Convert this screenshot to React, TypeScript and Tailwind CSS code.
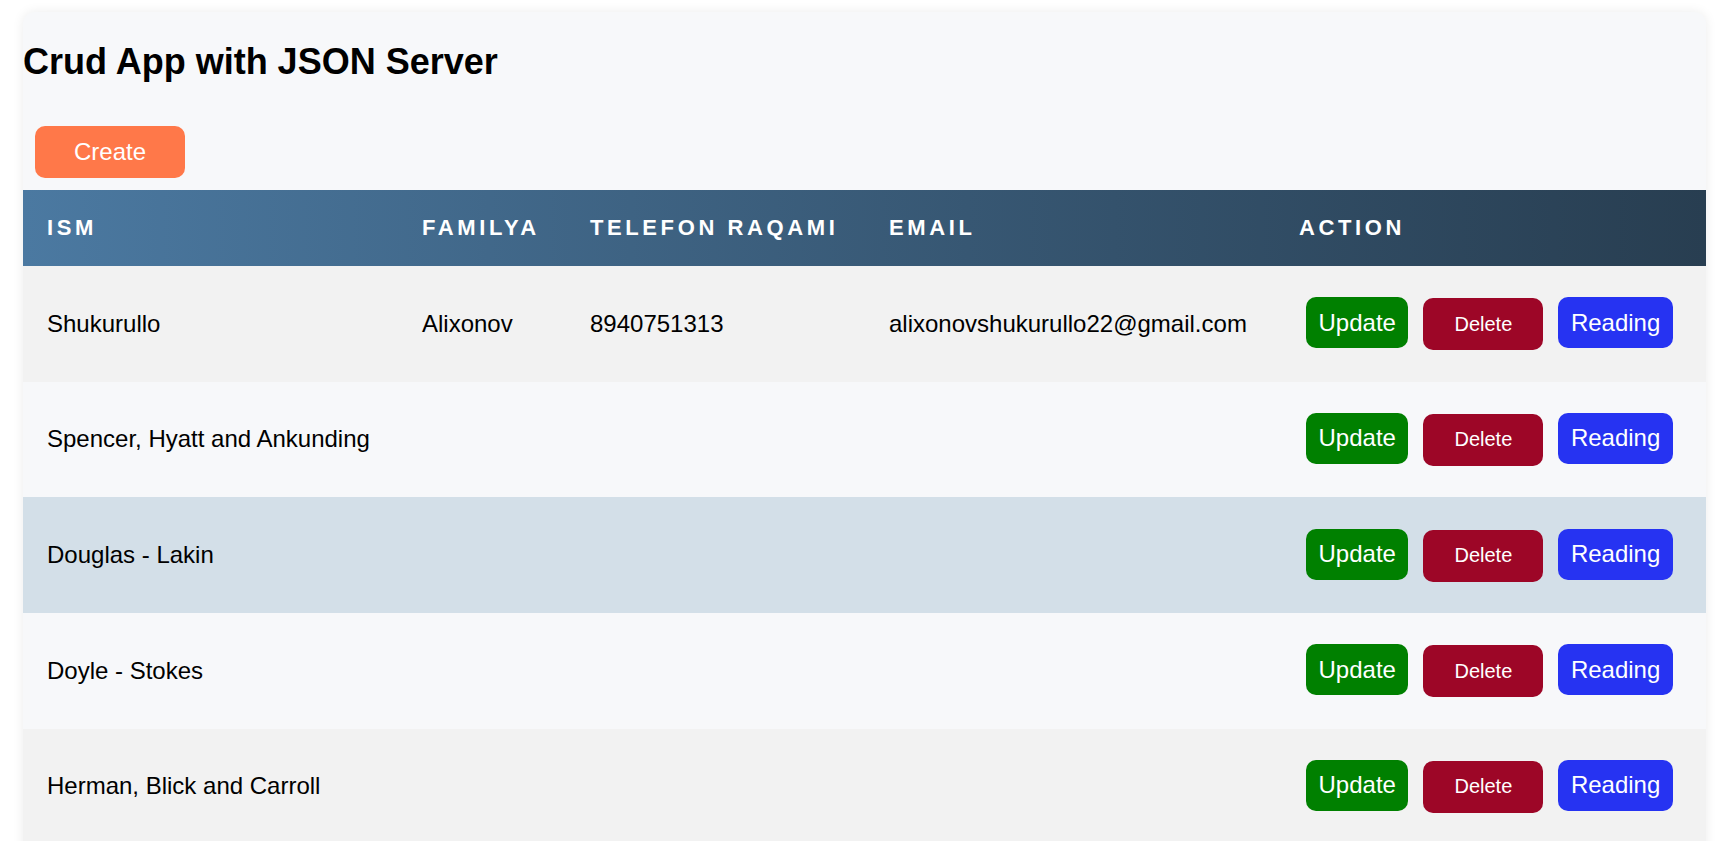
import React from "react";

type Row = { name: string; family: string; phone: string; email: string; bg: string };

const rows: Row[] = [
  { name: "Shukurullo", family: "Alixonov", phone: "8940751313", email: "alixonovshukurullo22@gmail.com", bg: "bg-[#f2f2f2]" },
  { name: "Spencer, Hyatt and Ankunding", family: "", phone: "", email: "", bg: "bg-[#f7f8fa]" },
  { name: "Douglas - Lakin", family: "", phone: "", email: "", bg: "bg-[#d3dfe8]" },
  { name: "Doyle - Stokes", family: "", phone: "", email: "", bg: "bg-[#f7f8fa]" },
  { name: "Herman, Blick and Carroll", family: "", phone: "", email: "", bg: "bg-[#f2f2f2]" },
];

const cols = "grid grid-cols-[375px_168px_299px_410px_1fr]";

export default function App() {
  return (
    <div className="min-h-screen bg-white font-['Liberation_Sans',Arial,sans-serif] text-black overflow-hidden h-[841px]">
      <div className="ml-[23px] mt-[12px] w-[1683px] rounded-xl bg-[#f7f8fa] shadow-[0_0_12px_rgba(0,0,0,0.08)] pb-[20px]">
        <h1 className="pt-[29px] text-[36px] leading-[41px] font-bold">Crud App with JSON Server</h1>
        <div className="mt-[44px] ml-[12px]">
          <button className="w-[150px] h-[52px] rounded-[10px] bg-[#ff7849] text-white text-[24px] leading-[28px]">
            Create
          </button>
        </div>
        <div className={`${cols} mt-[12px] h-[76px] items-center bg-gradient-to-r from-[#4b79a1] to-[#283e51] text-white text-[22px] font-bold uppercase tracking-[3.6px]`}>
          <div className="pl-[24px] pb-[2px]">Ism</div>
          <div className="pl-[24px] pb-[2px]">Familya</div>
          <div className="pl-[24px] pb-[2px]">Telefon raqami</div>
          <div className="pl-[24px] pb-[2px]">Email</div>
          <div className="pl-[24px] pb-[2px]">Action</div>
        </div>
        {rows.map((r, i) => (
          <div key={i} className={`${cols} h-[115.67px] items-center text-[24px] ${r.bg}`}>
            <div className="pl-[24px]">{r.name}</div>
            <div className="pl-[24px]">{r.family}</div>
            <div className="pl-[24px]">{r.phone}</div>
            <div className="pl-[24px]">{r.email}</div>
            <div className="pl-[31px] pb-[2px] flex items-center gap-[15px]">
              <button className="h-[51px] px-[12.5px] rounded-[10px] bg-[#008000] text-white text-[24px] leading-[28px]">Update</button>
              <button className="h-[52px] w-[120px] mt-[3px] rounded-[10px] bg-[#9d0627] text-white text-[20px] leading-[23px]">Delete</button>
              <button className="h-[51px] px-[12.5px] rounded-[10px] bg-[#2633f2] text-white text-[24px] leading-[28px]">Reading</button>
            </div>
          </div>
        ))}
      </div>
    </div>
  );
}
